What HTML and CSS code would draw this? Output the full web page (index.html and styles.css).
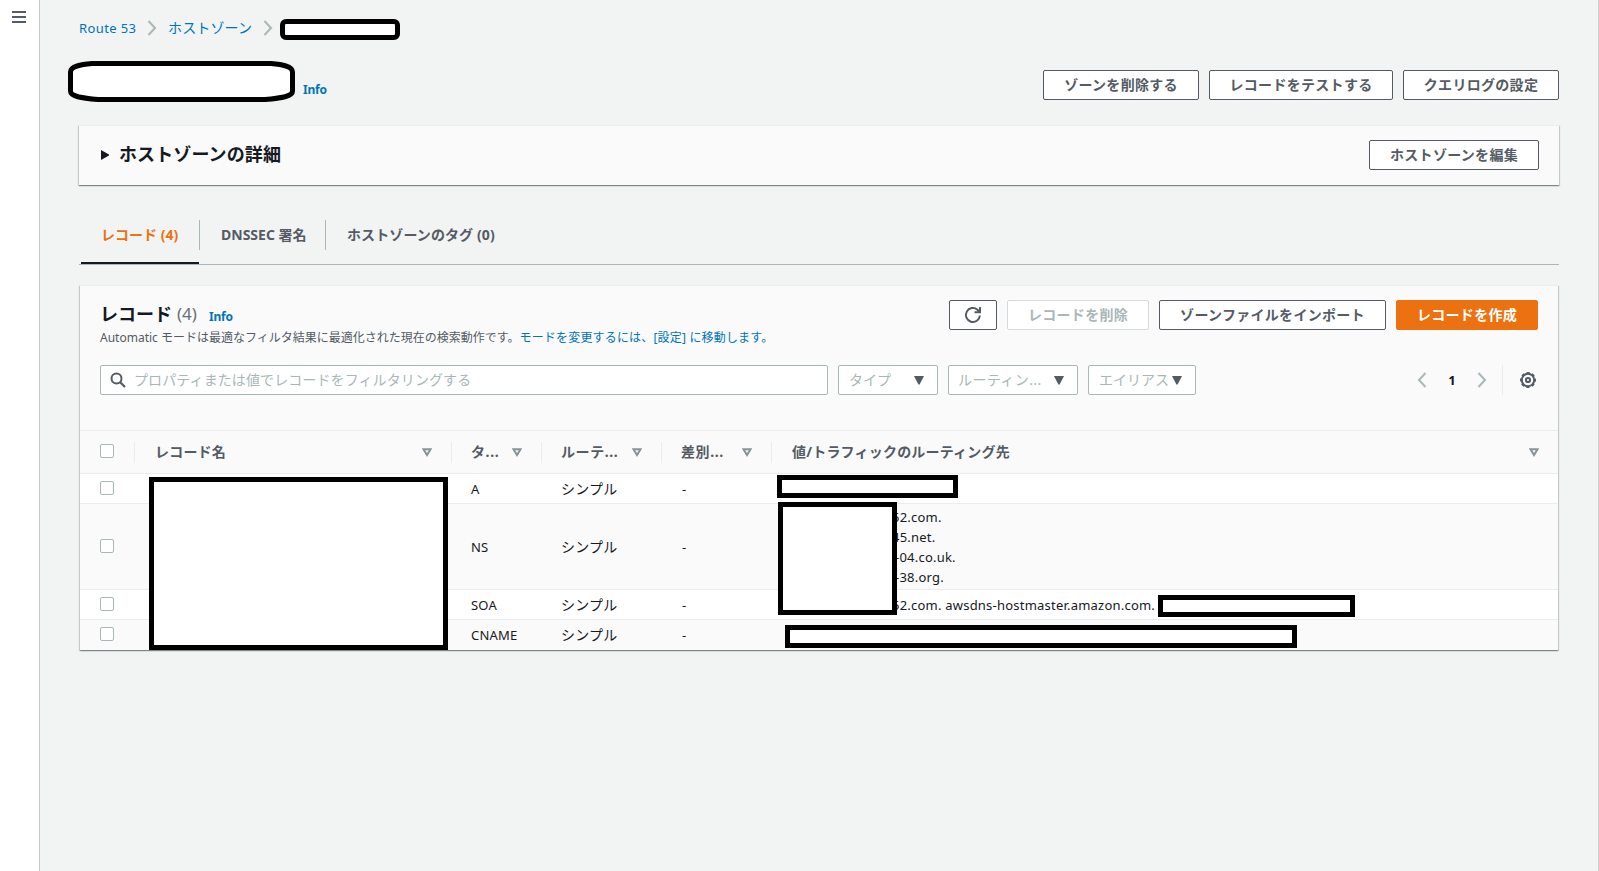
FILE: index.html
```html
<!DOCTYPE html>
<html lang="ja">
<head>
<meta charset="utf-8">
<title>Route 53</title>
<link rel="stylesheet" href="styles.css">
</head>
<body>
<svg class="defs" width="0" height="0">
  <symbol id="chev" viewBox="0 0 10 16"><path d="M1.5 1l6.5 7-6.5 7" fill="none" stroke="#aab7b8" stroke-width="2"/></symbol>
  <symbol id="sort" viewBox="0 0 10 9"><path d="M1.5 1.2h7L5 7z" fill="none" stroke="#879596" stroke-width="2"/></symbol>
  <symbol id="caret" viewBox="0 0 10 9"><path d="M0 0h10L5.6 8.5h-1.2z" fill="#545b64"/></symbol>
</svg>
<div class="app">
  <aside class="rail">
    <svg width="14" height="12" viewBox="0 0 14 12"><path d="M0 1h14M0 6h14M0 11h14" stroke="#545b64" stroke-width="2"/></svg>
  </aside>
  <main class="main">
    <nav class="crumbs">
      <a class="crumb-a">Route 53</a>
      <svg class="chev c1" width="10" height="16"><use href="#chev"/></svg>
      <a class="crumb-b">ホストゾーン</a>
      <svg class="chev c2" width="10" height="16"><use href="#chev"/></svg>
      <span class="mask mask-crumb"></span>
    </nav>
    <header class="title-row">
      <svg class="title-mask" width="227" height="41" viewBox="0 0 227 41"><path d="M24 2.5H203C214 3.5 224.500 5 224.500 11V30C224.500 35.500 214 37 197 38.500H30C13 37 2.500 35.500 2.500 30V11C2.500 5 13 3.500 24 2.500Z" fill="#fff" stroke="#000" stroke-width="5"/></svg>
      <a class="info title-info">Info</a>
      <div class="actions">
        <button class="btn del-zone">ゾーンを削除する</button>
        <button class="btn">レコードをテストする</button>
        <button class="btn">クエリログの設定</button>
      </div>
    </header>
    <section class="panel details">
      <svg width="8" height="10" viewBox="0 0 8 10"><path d="M0 0l8 4.500v1L0 10z" fill="#16191f"/></svg>
      <h2>ホストゾーンの詳細</h2>
      <button class="btn edit">ホストゾーンを編集</button>
    </section>
    <div class="tabs">
      <div class="tab active"><span>レコード (4)</span></div>
      <div class="tab t2"><span>DNSSEC 署名</span></div>
      <div class="tab t3"><span>ホストゾーンのタグ (0)</span></div>
    </div>
    <section class="panel records">
      <div class="rec-head">
        <div>
          <div class="rec-title"><h2>レコード</h2><span class="count">(4)</span><a class="info">Info</a></div>
          <p class="desc">Automatic モードは最適なフィルタ結果に最適化された現在の検索動作です。<a>モードを変更するには、[設定] に移動します。</a></p>
        </div>
        <div class="actions">
          <button class="btn refresh"><svg width="18" height="18" viewBox="0 0 18 18"><path d="M15.900 9.500A7 7 0 1 1 13.500 3.700L15.500 5.800M16 1V6.200H10.500" fill="none" stroke="#545b64" stroke-width="2"/></svg></button>
          <button class="btn disabled">レコードを削除</button>
          <button class="btn import">ゾーンファイルをインポート</button>
          <button class="btn primary">レコードを作成</button>
        </div>
      </div>
      <div class="filters">
        <div class="field search"><svg width="16" height="16" viewBox="0 0 16 16"><circle cx="6.500" cy="6.500" r="5" fill="none" stroke="#545b64" stroke-width="2"/><path d="M10 10l5 5" stroke="#545b64" stroke-width="2.200"/></svg><span>プロパティまたは値でレコードをフィルタリングする</span></div>
        <div class="field sel s1"><span>タイプ</span><svg width="10" height="9"><use href="#caret"/></svg></div>
        <div class="field sel s2"><span>ルーティン...</span><svg width="10" height="9"><use href="#caret"/></svg></div>
        <div class="field sel s3"><span>エイリアス</span><svg width="10" height="9"><use href="#caret"/></svg></div>
        <div class="pager">
          <svg class="flip" width="10" height="16"><use href="#chev"/></svg>
          <b>1</b>
          <svg width="10" height="16"><use href="#chev"/></svg>
        </div>
        <div class="gear"><svg width="16" height="16" viewBox="0 0 16 16" fill="none" stroke="#545b64"><circle cx="8" cy="8" r="6.200" stroke-width="2"/><circle cx="8" cy="8" r="7.300" stroke-width="1.400" stroke-dasharray="3.200 2.530" stroke-dashoffset="1.600"/><circle cx="8" cy="8" r="2.100" stroke-width="2"/></svg></div>
      </div>
      <div class="table">
        <div class="tr th">
          <div class="td"><i class="cb"></i></div>
          <div class="td"><span>レコード名</span><svg width="10" height="9"><use href="#sort"/></svg></div>
          <div class="td"><span>タ...</span><svg width="10" height="9"><use href="#sort"/></svg></div>
          <div class="td"><span>ルーテ...</span><svg width="10" height="9"><use href="#sort"/></svg></div>
          <div class="td"><span>差別...</span><svg width="10" height="9"><use href="#sort"/></svg></div>
          <div class="td"><span>値/トラフィックのルーティング先</span><svg width="10" height="9"><use href="#sort"/></svg></div>
        </div>
        <div class="tr"><div class="td"><i class="cb"></i></div><div class="td"></div><div class="td">A</div><div class="td">シンプル</div><div class="td">-</div><div class="td"></div></div>
        <div class="tr tall alt"><div class="td"><i class="cb"></i></div><div class="td"></div><div class="td">NS</div><div class="td">シンプル</div><div class="td">-</div><div class="td vals"><span>52.com.</span><span>45.net.</span><span class="dash">-04.co.uk.</span><span class="dash">-38.org.</span></div></div>
        <div class="tr"><div class="td"><i class="cb"></i></div><div class="td"></div><div class="td">SOA</div><div class="td">シンプル</div><div class="td">-</div><div class="td vals"><span>52.com. awsdns-hostmaster.amazon.com.</span></div></div>
        <div class="tr alt last"><div class="td"><i class="cb"></i></div><div class="td"></div><div class="td">CNAME</div><div class="td">シンプル</div><div class="td">-</div><div class="td"></div></div>
        <span class="mask m-names"></span>
        <span class="mask m-a"></span>
        <span class="mask m-ns"></span>
        <span class="mask m-soa"></span>
        <span class="mask m-cname"></span>
      </div>
    </section>
  </main>
</div>
</body>
</html>
```
FILE: styles.css
```css
* { box-sizing: border-box; }
body { margin: 0; background: #f2f3f3; color: #16191f; font: 14px/20px "Noto Sans", "Noto Sans CJK JP", sans-serif; white-space: nowrap; }
svg { display: block; flex: none; }
.defs { position: absolute; }
a { color: #0073bb; }
h2 { margin: 0; font-size: 18px; line-height: 22px; font-weight: 700; }
.app { display: flex; width: 1599px; height: 871px; overflow: hidden; border-right: 1px solid #ccd1d1; }
.rail { flex: none; width: 40px; background: #fff; border-right: 1px solid #c4c9ca; padding: 11px 0 0 12px; }
.main { flex: none; width: 1519px; margin-left: 39px; }

.crumbs { display: flex; align-items: center; height: 56px; width: 1480px; }
.crumb-a { font-size: 13px; width: 57px; letter-spacing: 0.38px; }
.crumb-b { width: 85px; letter-spacing: 0.15px; }
.c1 { margin: 0 11px 0 11px; }
.c2 { margin: 0 7px 0 10px; }
.mask { background: #fff; border: 5px solid #000; }
.mask-crumb { width: 120px; height: 21px; border-radius: 6px; margin-top: 3px; }

.title-row { display: flex; height: 69px; width: 1480px; }
.title-mask { margin: 5px 0 0 -11px; }
.info { font-size: 12px; line-height: 20px; font-weight: 700; letter-spacing: -0.2px; }
.title-info { margin: 24px 0 0 8px; }
.actions { display: flex; gap: 10px; margin: 14px 0 0 auto; }
.btn { height: 30px; padding: 0 19px; border: 1px solid #545b64; border-radius: 2px; background: #fff; color: #545b64; font: 700 14px/20px "Noto Sans", "Noto Sans CJK JP", sans-serif; letter-spacing: 0.3px; white-space: nowrap; }
.title-row .btn { width: 156px; }
.title-row .btn:nth-child(2) { width: 184px; }
.btn.edit { width: 170px; }
.disabled { width: 142px; border-color: #d5dbdb; color: #aab7b8; }
.primary { width: 142px; border-color: #ec7211; background: #ec7211; color: #fff; }
.refresh { width: 48px; padding: 0 14px; }
.import { width: 227px; }

.panel { background: #fafafa; border-top: 1px solid #eaeded; box-shadow: 0 1px 1px rgba(0,28,36,.3), 1px 1px 1px rgba(0,28,36,.15), -1px 1px 1px rgba(0,28,36,.15); }
.details { display: flex; align-items: flex-start; width: 1480px; height: 60px; padding: 14px 20px 0 22px; }
.details svg { margin-top: 10px; }
.details h2 { margin: 3px 0 0 10px; letter-spacing: 0.1px; }
.details .btn { margin-left: auto; }

.tabs { display: flex; width: 1480px; height: 80px; border-bottom: 1px solid #aab7b8; padding: 35px 0 0 2px; }
.tab { height: 30px; padding: 5px 20px 0; color: #545b64; font-weight: 700; border-right: 1px solid #aab7b8; }
.active { position: relative; width: 119px; color: #ec7211; }
.active::after { content: ""; position: absolute; left: 0; top: 42px; width: 118px; height: 2px; background: #16191f; }
.t2 { width: 126px; padding-left: 21px; }
.t3 { border: 0; padding-left: 21px; letter-spacing: 0.1px; }

.records { width: 1478px; margin: 20px 0 0 1px; height: 365px; }
.rec-head { display: flex; height: 79px; padding: 0 20px; }
.rec-head .actions { margin-top: 14px; }
.rec-title { display: flex; padding-top: 17px; height: 42px; }
.count { font-size: 17px; line-height: 22px; color: #687078; margin-left: 5px; width: 22px; }
.rec-title .info { margin: 4px 0 0 10px; }
.desc { margin: 0; font-size: 12px; line-height: 20px; color: #545b64; }
.desc a { letter-spacing: 0.18px; }
.filters { display: flex; height: 65px; padding-left: 20px; }
.field { display: flex; align-items: center; height: 30px; background: #fff; border: 1px solid #aab7b8; border-radius: 2px; color: #aab7b8; margin-right: 10px; }
.search { width: 728px; padding-left: 9px; gap: 8px; letter-spacing: 0.1px; }
.sel { justify-content: space-between; padding: 0 13px 0 10px; }
.s1 { width: 100px; }
.s2 { width: 130px; padding-left: 9px; letter-spacing: 0.4px; }
.s3 { width: 108px; }
.pager { display: flex; align-items: center; justify-content: space-between; height: 30px; width: 70px; margin-left: 211px; font-size: 13px; }
.flip { transform: scaleX(-1); }
.gear { display: flex; align-items: center; height: 30px; margin-left: 15px; padding-left: 17px; border-left: 1px solid #eaeded; }

.table { position: relative; border-top: 1px solid #eaeded; }
.tr { display: grid; grid-template-columns: 55px 317px 90px 120px 110px 786px; height: 30px; background: #fff; border-bottom: 1px solid #eaeded; }
.alt { background: #fafafa; }
.tall { height: 86px; }
.last { border: 0; height: 29px; }
.td { display: flex; align-items: center; padding-left: 19px; font-size: 13px; letter-spacing: 0.2px; }
.td:first-child { padding: 0 0 2px 20px; }
.td:nth-child(4) { font-size: 14px; }
.td:nth-child(5) { padding-left: 20px; }
.cb { width: 14px; height: 14px; background: #fff; border: 1px solid #aab7b8; border-radius: 2px; }
.th { height: 43px; background: #fafafa; color: #545b64; font-weight: 700; }
.th .td { font-size: 14px; justify-content: space-between; padding: 0 20px 0 20px; position: relative; }
.th .td:first-child { padding-bottom: 2px; }
.th .td:last-child { padding-right: 19px; }
.th .td:not(:last-child)::after { content: ""; position: absolute; right: 0; top: 11px; width: 1px; height: 21px; background: #eaeded; }
.th .td:nth-child(3), .th .td:nth-child(4), .th .td:nth-child(5) { letter-spacing: 0.6px; padding-left: 19px; }
.td.vals { flex-direction: column; align-items: flex-start; justify-content: center; padding-left: 120px; letter-spacing: 0.22px; }
.dash { margin-left: 3px; }
.table .mask { position: absolute; }
.m-names { left: 69px; top: 46px; width: 299px; height: 173px; }
.m-a { left: 697px; top: 44px; width: 181px; height: 23px; }
.m-ns { left: 698px; top: 71px; width: 119px; height: 113px; }
.m-soa { left: 1078px; top: 164px; width: 197px; height: 22px; }
.m-cname { left: 705px; top: 194px; width: 512px; height: 23px; }
```
